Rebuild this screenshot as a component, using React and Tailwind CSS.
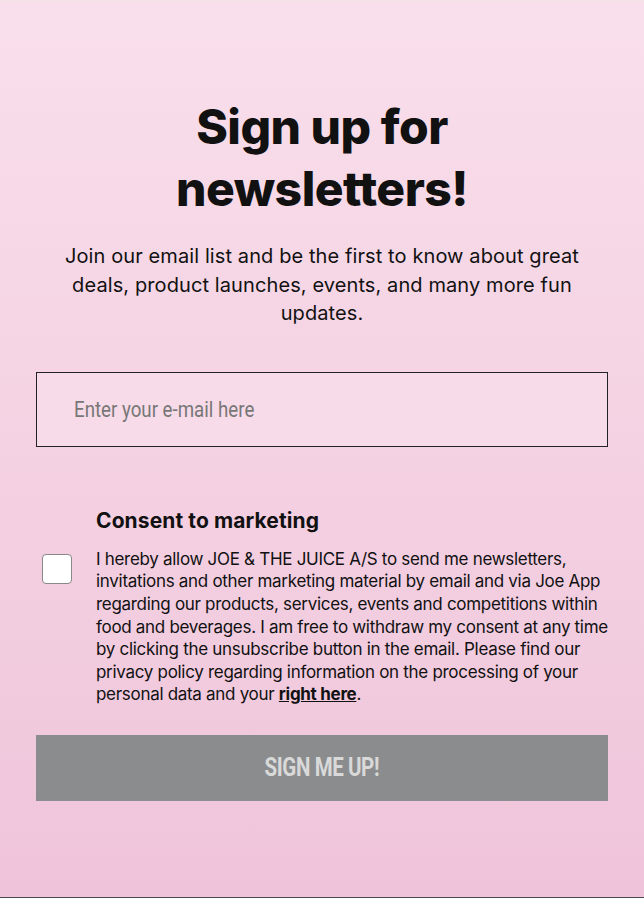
import React from 'react'

export default function App() {
  return (
    <div className="w-[644px] h-[898px] bg-gradient-to-b from-[#f9dfeb] to-[#efc4da] border-t border-[#f3e3e6] border-b border-b-[#4a4a4a] font-['Inter',sans-serif] text-[#111]">
      <div className="px-[36px] pt-[95px]">
        {/* Heading */}
        <h1 className="text-center font-extrabold text-[48px] leading-[62px] tracking-[-0.5px]">
          Sign up for
          <br />
          newsletters!
        </h1>
        <p className="mt-[22px] text-center text-[20px] leading-[28.6px] tracking-[0.1px] px-[16px]">
          Join our email list and be the first to know about great deals, product launches, events, and many more fun updates.
        </p>

        {/* Email input */}
        <div className="mt-[44px] h-[75px] border border-[#222] bg-[#f7dbe8] flex items-center px-[37px] font-['Roboto',sans-serif]">
          <span className="inline-block origin-left scale-x-[0.85] text-[22px] text-[#777]">Enter your e-mail here</span>
        </div>

        {/* Consent */}
        <div className="mt-[60px] flex">
          <div className="w-[60px] shrink-0 pt-[47px] pl-[6px]">
            <div className="w-[30px] h-[30px] bg-white border border-[#888] rounded-[4px]" />
          </div>
          <div>
            <h2 className="text-[21px] font-bold leading-[28px] tracking-[0.1px]">Consent to marketing</h2>
            <p className="mt-[13px] text-[17px] leading-[22.6px] tracking-[-0.3px]">
              I hereby allow JOE &amp; THE JUICE A/S to send me newsletters, invitations and other marketing material by email and via Joe App regarding our products, services, events and competitions within food and beverages. I am free to withdraw my consent at any time by clicking the unsubscribe button in the email. Please find our privacy policy regarding information on the processing of your personal data and your <a className="font-bold underline">right here</a>.
            </p>
          </div>
        </div>

        {/* Button */}
        <button className="mt-[29px] w-full h-[66px] bg-[#8b8c8d] flex items-center justify-center font-['Roboto',sans-serif]">
          <span className="inline-block scale-x-[0.82] text-[25px] font-bold text-[#d9d9d9] tracking-[-0.5px]">SIGN ME UP!</span>
        </button>
      </div>
    </div>
  )
}
